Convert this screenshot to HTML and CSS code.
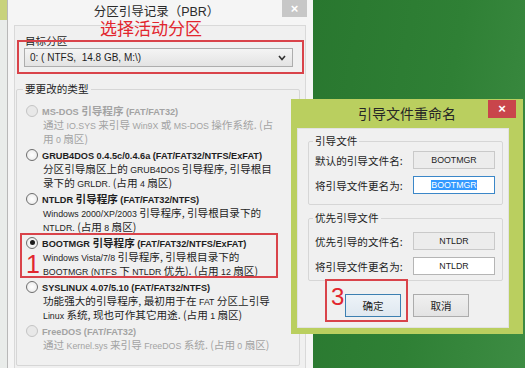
FILE: index.html
```html
<!DOCTYPE html>
<html>
<head lang="zh">
	<meta charset="UTF-8">
	<title>分区引导记录（PBR）</title>
	<link rel="stylesheet" href="styles.css">
</head>
<body>

<div class="screen">

	<div class="edge"></div>

	<div class="win">
		<div class="win-title">分区引导记录（PBR）</div>
		<span class="win-close">&#215;</span>

		<div class="win-body">
			<div class="field-label">目标分区</div>
			<div class="combo">
				<span>0: ( NTFS,&nbsp; 14.8 GB, M:\)</span>
				<svg width="8" height="6" viewBox="0 0 8 6"><polyline points="1,1 4,4.5 7,1" fill="none" stroke="#333" stroke-width="1.6"/></svg>
			</div>

			<fieldset class="group">
				<legend>要更改的类型</legend>

				<div class="opt off">
					<div class="opt-title"><i class="radio"></i><span><span class="l">MS-DOS</span> 引导程序 <span class="l">(FAT/FAT32)</span></span></div>
					<div class="opt-desc">通过 <span class="l">IO.SYS</span> 来引导 <span class="l">Win9X</span> 或 <span class="l">MS-DOS</span> 操作系统. (占<br>用 <span class="l">0</span> 扇区)</div>
				</div>

				<div class="opt">
					<div class="opt-title"><i class="radio"></i><span><span class="l">GRUB4DOS 0.4.5c/0.4.6a (FAT/FAT32/NTFS/ExFAT)</span></span></div>
					<div class="opt-desc">分区引导扇区上的 <span class="l">GRUB4DOS</span> 引导程序, 引导根目<br>录下的 <span class="l">GRLDR.</span> (占用 <span class="l">4</span> 扇区)</div>
				</div>

				<div class="opt">
					<div class="opt-title"><i class="radio"></i><span><span class="l">NTLDR</span> 引导程序 <span class="l">(FAT/FAT32/NTFS)</span></span></div>
					<div class="opt-desc"><span class="l">Windows 2000/XP/2003</span> 引导程序, 引导根目录下的<br><span class="l">NTLDR.</span> (占用 <span class="l">8</span> 扇区)</div>
				</div>

				<div class="opt">
					<div class="opt-title"><i class="radio on"></i><span><span class="l">BOOTMGR</span> 引导程序 <span class="l">(FAT/FAT32/NTFS/ExFAT)</span></span></div>
					<div class="opt-desc"><span class="l">Windows Vista/7/8</span> 引导程序, 引导根目录下的<br><span class="l">BOOTMGR (NTFS</span> 下 <span class="l">NTLDR</span> 优先). (占用 <span class="l">12</span> 扇区)</div>
				</div>

				<div class="opt">
					<div class="opt-title"><i class="radio"></i><span><span class="l">SYSLINUX 4.07/5.10 (FAT/FAT32/NTFS)</span></span></div>
					<div class="opt-desc">功能强大的引导程序, 最初用于在 <span class="l">FAT</span> 分区上引导<br><span class="l">Linux</span> 系统, 现也可作其它用途. (占用 <span class="l">1</span> 扇区)</div>
				</div>

				<div class="opt off">
					<div class="opt-title"><i class="radio"></i><span><span class="l">FreeDOS (FAT/FAT32)</span></span></div>
					<div class="opt-desc">通过 <span class="l">Kernel.sys</span> 来引导 <span class="l">FreeDOS</span> 系统. (占用 <span class="l">0</span> 扇区)</div>
				</div>
			</fieldset>
		</div>

		<div class="note note-target">选择活动分区</div>
		<div class="mark mark-target"></div>
		<div class="mark mark-boot"><span class="mark-num">1</span></div>
	</div>

	<div class="desk"></div>

	<div class="dlg">
		<div class="dlg-title">引导文件重命名</div>
		<span class="dlg-close">&#215;</span>

		<div class="dlg-body">
			<fieldset class="box">
				<legend>引导文件</legend>
				<div class="row">
					<label>默认的引导文件名:</label>
					<div class="text ro">BOOTMGR</div>
				</div>
				<div class="row">
					<label>将引导文件更名为:</label>
					<div class="text focus"><span>BOOTMGR</span></div>
				</div>
			</fieldset>

			<fieldset class="box">
				<legend>优先引导文件</legend>
				<div class="row">
					<label>优先引导的文件名:</label>
					<div class="text ro">NTLDR</div>
				</div>
				<div class="row">
					<label>将引导文件更名为:</label>
					<div class="text">NTLDR</div>
				</div>
			</fieldset>

			<div class="actions">
				<button class="btn default">确定</button>
				<button class="btn">取消</button>
			</div>
		</div>

		<div class="mark mark-ok"><span class="mark-num">3</span></div>
	</div>

</div>

</body>
</html>
```

FILE: styles.css
```css
* {
	margin: 0;
	padding: 0;
	box-sizing: border-box;
}
body {
	width: 525px;
	height: 368px;
	overflow: hidden;
	font-family: "Noto Sans CJK SC", sans-serif;
	font-size: 10.6px;
	color: #1e1e1e;
}
.l {
	font-family: "Liberation Sans", "Noto Sans CJK SC", sans-serif;
	font-size: 8.8px;
	line-height: 10px;
}

.screen {
	position: relative;
	display: flex;
	width: 525px;
	height: 368px;
	overflow: hidden;
}
.edge {
	width: 7px;
	background: linear-gradient(#c8d27c 0, #c8d27c 20px, #e9ecea 20px);
}

/* main window */
.win {
	position: relative;
	display: flex;
	flex-direction: column;
	width: 306px;
	background: #f5f5f5;
	border-left: 1px solid #b8b8b8;
}
.win-title {
	height: 25px;
	line-height: 24px;
	padding-right: 8px;
	text-align: center;
	font-family: "Liberation Sans", "Noto Sans CJK SC", sans-serif;
	font-size: 12.5px;
	color: #2b2b2b;
}
.win-close {
	position: absolute;
	top: 0;
	right: 6px;
	width: 25px;
	height: 17px;
	background: #c7c7c7;
	color: #fff;
	text-align: center;
	font: bold 13px/17px "Liberation Sans", sans-serif;
}
.win-body {
	flex: 1;
	margin: 0 7px 0 6px;
	background: #f0f0f0;
	border: 1px solid #d9d9d9;
	border-bottom: 0;
}
.field-label {
	margin: 8px 0 0 10px;
	line-height: 13px;
}
.combo {
	display: flex;
	align-items: center;
	justify-content: space-between;
	height: 19px;
	margin: 1px 12px 0 9px;
	padding: 0 6px 0 5px;
	background: linear-gradient(#f4f4f4, #e3e3e3);
	border: 1px solid #adadad;
	font: 10px "Liberation Sans", sans-serif;
}
.group {
	margin: 16px 5px 0 1px;
	padding: 8px 0 12px;
	border: 1px solid #d6d6d6;
	border-radius: 2px;
}
.group legend {
	margin-left: 6px;
	padding: 0 2px;
	line-height: 12px;
}

.opt {
	height: 44px;
	padding-left: 9px;
}
.opt.off:last-child {
	height: 30px;
}
.opt-title {
	display: flex;
	align-items: center;
	height: 15px;
	font-weight: bold;
	white-space: nowrap;
}
.opt-title .l {
	font-size: 9.2px;
}
.radio {
	position: relative;
	flex: none;
	width: 12px;
	height: 12px;
	margin-right: 4px;
	border: 1px solid #6e6e6e;
	border-radius: 50%;
	background: radial-gradient(#ffffff, #e6e6e6);
}
.radio.on:after {
	content: "";
	position: absolute;
	left: 2.5px;
	top: 2.5px;
	width: 5px;
	height: 5px;
	border-radius: 50%;
	background: #1c1c1c;
}
.opt-desc {
	padding-left: 17px;
	line-height: 13.5px;
	white-space: nowrap;
}
.opt.off {
	color: #a3a3a3;
}
.opt.off .radio {
	border-color: #c4c4c4;
	background: #e8e8e8;
}

/* red marks */
.mark {
	position: absolute;
	border: 2px solid #d9434a;
}
.mark-num {
	position: absolute;
	color: #e2262e;
	font-family: "Liberation Sans", sans-serif;
}
.note {
	position: absolute;
	color: #e2262e;
	font-family: "Liberation Sans", "Noto Sans CJK SC", sans-serif;
	font-size: 17px;
	line-height: 17px;
}
.note-target {
	left: 92px;
	top: 21px;
}
.mark-target {
	left: 9px;
	top: 40px;
	width: 287px;
	height: 34px;
}
.mark-boot {
	left: 12px;
	top: 233px;
	width: 258px;
	height: 45px;
}
.mark-boot .mark-num {
	left: 4px;
	top: 17px;
	font-size: 25px;
	line-height: 25px;
}

/* desktop */
.desk {
	flex: 1;
	background: linear-gradient(100deg, #29772f 0%, #2f8035 55%, #3d8c43 100%);
}

/* rename dialog */
.dlg {
	position: absolute;
	left: 291px;
	top: 99px;
	display: flex;
	flex-direction: column;
	width: 232px;
	height: 235px;
	background: #bacf5f;
}
.dlg-title {
	height: 29px;
	line-height: 29px;
	text-align: center;
	font-size: 14px;
	color: #262626;
}
.dlg-close {
	position: absolute;
	top: 1px;
	right: 7px;
	width: 28px;
	height: 18px;
	background: #c9454b;
	color: #fff;
	text-align: center;
	font: bold 13px/18px "Liberation Sans", sans-serif;
}
.dlg-body {
	flex: 1;
	margin: 0 14px 6px 6px;
	padding: 6px 5px 0 10px;
	background: #f0f0f0;
	border: 1px solid #e2e2e2;
}
.box {
	padding: 4px 0 10px 6px;
	border: 1px solid #d6d6d6;
	border-radius: 2px;
}
.box + .box {
	margin-top: 7px;
	padding: 8px 0 5px 6px;
}
.box legend {
	margin-left: -2px;
	padding: 0 2px;
	line-height: 12px;
}
.row {
	display: flex;
	align-items: center;
	height: 18px;
}
.row + .row {
	margin-top: 7px;
}
.row label {
	width: 98px;
}
.text {
	width: 82px;
	height: 18px;
	border: 1px solid #b5b5b5;
	background: #fff;
	text-align: center;
	font: 8.8px/16px "Liberation Sans", sans-serif;
}
.text.ro {
	background: #ececec;
	border-color: #c9c9c9;
}
.text.focus {
	border-color: #3b87c8;
}
.text.focus span {
	background: #3399ff;
	color: #fff;
}
.actions {
	display: flex;
	gap: 12px;
	margin-top: 13px;
	padding-left: 37px;
}
.btn {
	width: 56px;
	height: 23px;
	border: 1px solid #acacac;
	background: linear-gradient(#f0f0f0, #e3e3e3);
	font-family: inherit;
	font-size: 10.6px;
	color: #1e1e1e;
}
.btn.default {
	border-color: #3c7fb1;
	background: linear-gradient(#edf3f8, #dfe8f0);
}
.mark-ok {
	left: 34px;
	top: 180px;
	width: 83px;
	height: 43px;
}
.mark-ok .mark-num {
	left: 4px;
	top: 4px;
	font-size: 24px;
	line-height: 24px;
}
```
